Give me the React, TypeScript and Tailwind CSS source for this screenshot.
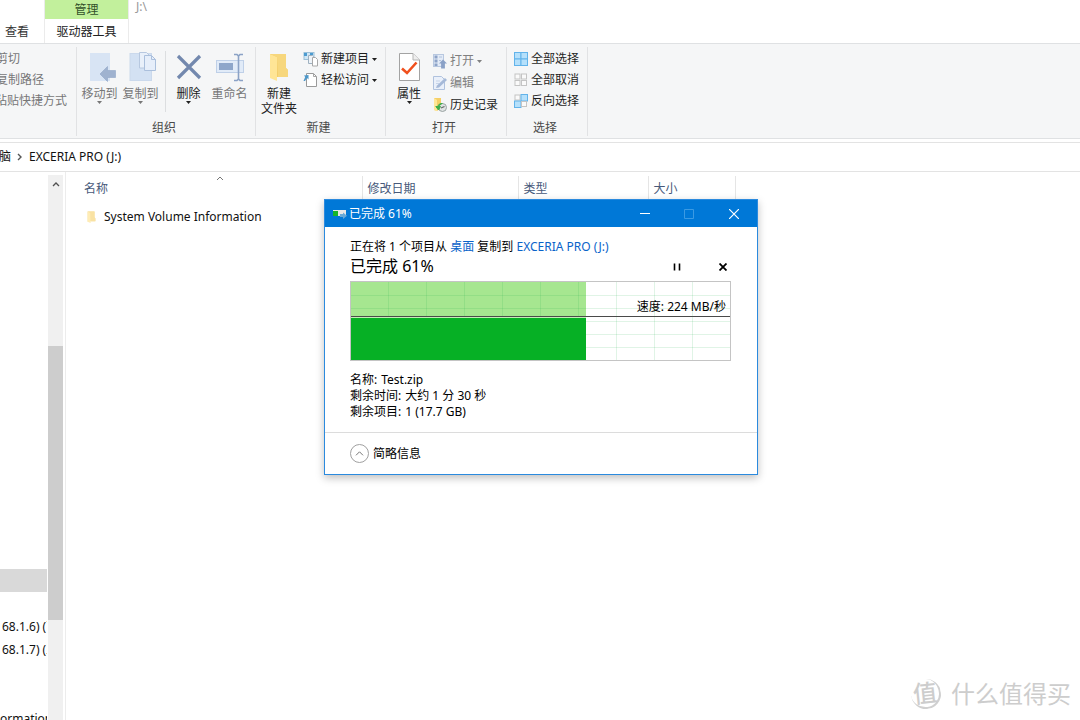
import React from "react";

function Caret({ className = "" }: { className?: string }) {
  return (
    <svg viewBox="0 0 5 3" className={`h-[3px] w-[5px] shrink-0 fill-current ${className}`} aria-hidden="true">
      <path d="M0 0H5L2.5 3Z" />
    </svg>
  );
}

function MoveIcon() {
  return (
    <svg viewBox="0 0 28 30" className="h-[30px] w-7 overflow-visible" aria-hidden="true">
      <rect x="4" y="1" width="20" height="28" fill="#d8e4f4" />
      <path d="M14 22L21.500 14.500V18.500H29.500V25.500H21.500V29.500Z" fill="#9fb2cf" stroke="#8ea4c6" strokeWidth=".6" />
    </svg>
  );
}

function CopyIcon() {
  return (
    <svg viewBox="0 0 28 30" className="h-[30px] w-7 overflow-visible" aria-hidden="true">
      <rect x="3" y="1.500" width="21.500" height="27" fill="#d3e1f3" stroke="#cbd9ec" />
      <path d="M12.500 .5h7l3 3v12.500h-10Z" fill="#e9f0fa" stroke="#b7c8e0" />
      <path d="M17.500 3.500h7l4 4v11h-11Z" fill="#e6eefa" stroke="#aabfdc" />
      <path d="M24.500 3.500v4h4" fill="none" stroke="#aabfdc" />
    </svg>
  );
}

function DeleteIcon() {
  return (
    <svg viewBox="0 0 28 30" className="h-[30px] w-7" aria-hidden="true">
      <path d="M3 4L25 26M25 4L3 26" stroke="#7388ae" strokeWidth="3.200" />
    </svg>
  );
}

function RenameIcon() {
  return (
    <svg viewBox="0 0 28 30" className="h-[30px] w-7" aria-hidden="true">
      <rect x=".5" y="8.500" width="27" height="12" fill="#e1ebf8" stroke="#bfd0e8" />
      <rect x="3" y="11" width="14" height="7" fill="#8ea6ca" />
      <path d="M18 2.500h3l1.500 1.500 1.500-1.500h3M22.500 4v23M18 28.500h3l1.500-1.500 1.500 1.500h3" fill="none" stroke="#8ba2c6" strokeWidth="1.600" />
    </svg>
  );
}

function FolderIcon({ className }: { className: string }) {
  return (
    <svg viewBox="0 0 20 28" className={className} aria-hidden="true">
      <path d="M1 1H17V15L19 17V24H6L1 25Z" fill="#f3cd69" />
      <path d="M1 1L8 4V28L1 25Z" fill="#ffe596" />
      <path d="M8 4L9 24H19V17L17 15V1H1Z" fill="#f7d77d" />
    </svg>
  );
}

function PropertiesIcon() {
  return (
    <svg viewBox="0 0 28 30" className="h-[30px] w-7" aria-hidden="true">
      <path d="M4.500 1.500H18L24.500 8V28.500H4.500Z" fill="#fff" stroke="#a3a3a3" />
      <path d="M18 1.500V8h6.500" fill="#eee" stroke="#b5b5b5" />
      <path d="M7 16.500L12 21 21.500 10.500" fill="none" stroke="#f0501e" strokeWidth="2.600" />
    </svg>
  );
}

function SmallIcon({ children }: { children: React.ReactNode }) {
  return (
    <svg viewBox="0 0 14 14" className="h-3.5 w-3.5 shrink-0 overflow-visible" aria-hidden="true">
      {children}
    </svg>
  );
}

function NewItemIcon() {
  return (
    <SmallIcon>
      <rect x="0" y=".5" width="10" height="7" fill="#cfe6f5" stroke="#9cc0d8" />
      <path d="M0 1h3v3H0zM6 1h3v2H6z" fill="#4c9bd0" />
      <path d="M4.500 3.500h4l1 1v7h-5Z" fill="#eef3f8" stroke="#9fb1c0" />
      <path d="M8.500 5.500h3l2 2v6.500h-5Z" fill="#fff" stroke="#a8a8a8" />
    </SmallIcon>
  );
}

function EasyAccessIcon() {
  return (
    <SmallIcon>
      <path d="M2.500 .5h7l3 3v10h-10Z" fill="#fff" stroke="#9a9a9a" />
      <path d="M9.500 .5v3h3" fill="none" stroke="#a5a5a5" />
      <path d="M0 2.500L4.500 2V6.500L3 5 1 8H-.5L1.200 4Z" fill="#4d97c9" />
    </SmallIcon>
  );
}

function OpenIcon() {
  return (
    <SmallIcon>
      <rect x=".5" y=".5" width="10" height="12" fill="#e3ebf7" stroke="#b8c8e0" />
      <path d="M1.500 1.500h3v3h-3zM1.500 5.500h3v3h-3zM1.500 9.500h3v2.500h-3z" fill="#8da3c8" />
      <path d="M6 3h3M6 6.500h2" stroke="#b2c2dc" />
      <path d="M10 5.500L14 9.500H11.900V14.500H8.100V9.500H6Z" fill="#8aa1c7" />
    </SmallIcon>
  );
}

function EditIcon() {
  return (
    <SmallIcon>
      <path d="M.5 .5h8l3 3v10H.5Z" fill="#eaf0fa" stroke="#b0c2de" />
      <path d="M3 5h4M3 7.500h3" stroke="#c6d4e9" />
      <path d="M3 12L4 9.500 12 2 14 4 6 11.500Z" fill="#a6b9d8" />
    </SmallIcon>
  );
}

function HistoryIcon() {
  return (
    <SmallIcon>
      <path d="M1 0h7v10l-4 3-3-1z" fill="#f5cf68" />
      <path d="M1 0l3 2v11l-3-1z" fill="#ffe797" />
      <circle cx="9.500" cy="9.500" r="4" fill="#dfe3e3" stroke="#9aa3a3" />
      <path d="M8 10L11.500 8.500" fill="none" stroke="#666" strokeWidth="1.300" />
      <path d="M9.500 5.500C7 5 5 6.500 5 9M2.800 8.500H7.500L5.500 12Z" fill="#3fae49" stroke="#3fae49" />
    </SmallIcon>
  );
}

function TilesIcon({ on }: { on: boolean[] }) {
  const spots = [[0.5, 0.5], [7, 0.5], [0.5, 7], [7, 7]];
  return (
    <SmallIcon>
      {spots.map(([x, y], i) => (
        <rect key={i} x={on[i] ? x : x + 0.5} y={on[i] ? y : y + 0.5} width={on[i] ? 6.5 : 5} height={on[i] ? 6.5 : 5} fill={on[i] ? "#b5e0fb" : "#fafafa"} stroke={on[i] ? "#62b3ea" : "#c4c4c4"} />
      ))}
    </SmallIcon>
  );
}

function Group({ label, width, children }: { label: string; width: string; children: React.ReactNode }) {
  return (
    <section className={`flex shrink-0 flex-col border-r border-[#e1e2e4] ${width}`} aria-label={label}>
      <div className="flex flex-1">{children}</div>
      <h2 className="pr-1 text-center leading-4 text-[#4a4a4a]">{label}</h2>
    </section>
  );
}

function BigButton({ icon, label, disabled, caret, width }: { icon: React.ReactNode; label: React.ReactNode; disabled?: boolean; caret?: boolean; width: string }) {
  return (
    <button type="button" disabled={disabled} className={`flex shrink-0 flex-col items-center pt-[5px] ${width} ${disabled ? "text-[#777]" : "text-[#222]"}`}>
      {icon}
      <span className="mt-1 leading-[15px] whitespace-nowrap">{label}</span>
      {caret && <Caret />}
    </button>
  );
}

function SmallButton({ icon, label, disabled, caret }: { icon: React.ReactNode; label: string; disabled?: boolean; caret?: boolean }) {
  return (
    <button type="button" disabled={disabled} className={`flex items-center leading-4 whitespace-nowrap ${disabled ? "text-[#808080]" : "text-[#1e1e1e]"}`}>
      {icon}
      <span className="ml-[3px]">{label}</span>
      {caret && <Caret className="ml-[3px]" />}
    </button>
  );
}

function Ribbon() {
  return (
    <div className="flex h-24 shrink-0 overflow-hidden border-y border-[#dfe1e3] bg-[#f5f6f7] pt-[3px] pb-0.5">
      <div className="flex w-[77px] shrink-0 flex-col items-end gap-[5px] border-r border-[#e1e2e4] pt-1 text-[#777]">
        <button type="button" className="mr-14 leading-4 whitespace-nowrap">剪切</button>
        <button type="button" className="mr-8 leading-4 whitespace-nowrap">复制路径</button>
        <button type="button" className="mr-[9px] leading-4 whitespace-nowrap">粘贴快捷方式</button>
      </div>
      <Group label="组织" width="w-[179px]">
        <div className="flex pl-0.5">
          <BigButton width="w-[41px]" icon={<MoveIcon />} label="移动到" disabled caret />
          <BigButton width="w-[41px]" icon={<CopyIcon />} label="复制到" disabled caret />
        </div>
        <div className="mt-1 mb-2 ml-1 border-l border-[#dcdee0]" />
        <div className="flex pl-0.5">
          <BigButton width="w-[41px]" icon={<DeleteIcon />} label="删除" caret />
          <BigButton width="w-[41px]" icon={<RenameIcon />} label="重命名" disabled />
        </div>
      </Group>
      <Group label="新建" width="w-[130px]">
        <BigButton width="w-[46px]" icon={<FolderIcon className="h-[30px] w-5" />} label={<>新建<br />文件夹</>} />
        <div className="flex flex-col gap-[5px] pt-1 pl-0.5">
          <SmallButton icon={<NewItemIcon />} label="新建项目" caret />
          <SmallButton icon={<EasyAccessIcon />} label="轻松访问" caret />
        </div>
      </Group>
      <Group label="打开" width="w-[121px]">
        <BigButton width="w-[46px]" icon={<PropertiesIcon />} label="属性" caret />
        <div className="flex flex-col gap-1.5 pt-1.5 pl-px">
          <SmallButton icon={<OpenIcon />} label="打开" disabled caret />
          <SmallButton icon={<EditIcon />} label="编辑" disabled />
          <SmallButton icon={<HistoryIcon />} label="历史记录" />
        </div>
      </Group>
      <Group label="选择" width="w-[81px]">
        <div className="flex flex-col gap-[5px] pt-1 pl-[7px]">
          <SmallButton icon={<TilesIcon on={[true, true, true, true]} />} label="全部选择" />
          <SmallButton icon={<TilesIcon on={[false, false, false, false]} />} label="全部取消" />
          <SmallButton icon={<TilesIcon on={[false, true, true, false]} />} label="反向选择" />
        </div>
      </Group>
    </div>
  );
}

function Chart() {
  return (
    <div className="relative mt-1 h-20 border border-[#c4c4c4]">
      <svg viewBox="0 0 379 78" preserveAspectRatio="none" className="block h-full w-full" role="img" aria-label="速度">
        <rect width="379" height="78" fill="#fff" />
        <rect width="235" height="36" fill="#a6e690" />
        <g stroke="#22b14c" strokeOpacity=".14">
          {[1, 2, 3, 4, 5, 6, 7, 8, 9].map((n) => (
            <path key={n} d={`M${n * 38 - 0.5} 0V78`} />
          ))}
          {[13, 26, 39, 52, 65].map((y) => (
            <path key={y} d={`M0 ${y + 0.5}H379`} />
          ))}
        </g>
        <rect y="36" width="235" height="42" fill="#06b025" />
        <path d="M0 35.500H235" stroke="#c2efb4" />
        <path d="M0 34.500H379" stroke="#4a4a4a" />
      </svg>
      <p className="absolute top-[17px] right-1 leading-4">速度: 224 MB/秒</p>
    </div>
  );
}

function CopyDialog() {
  return (
    <div role="dialog" aria-label="已完成 61%" className="absolute top-[199px] left-[324px] w-[434px] border border-[#2b8ade] bg-white text-black shadow-[0_3px_8px_rgba(0,0,0,0.25)]">
      <header className="flex h-[27px] items-center bg-[#0078d7] text-white">
        <svg viewBox="0 0 14 10" className="ml-2 h-2.5 w-3.5" aria-hidden="true">
          <rect y="1" width="13" height="6" fill="#e7e7e7" />
          <rect x="0" y="2" width="5" height="5" fill="#16b52b" />
          <path d="M7 5h3V3.500l4 3.200-4 3.200V8H7z" fill="#67a9d8" />
        </svg>
        <h1 className="ml-0.5 flex-1 leading-4">已完成 61%</h1>
        <button type="button" aria-label="最小化" className="flex h-full w-11 items-center justify-center">
          <svg viewBox="0 0 10 10" className="h-2.5 w-2.5 stroke-white"><path d="M0 4.500H10" /></svg>
        </button>
        <button type="button" disabled aria-label="最大化" className="flex h-full w-11 items-center justify-center">
          <svg viewBox="0 0 10 10" className="h-2.5 w-2.5 fill-none stroke-[#3b9ae3]"><path d="M.5 .5h9v9h-9Z" /></svg>
        </button>
        <button type="button" aria-label="关闭" className="flex h-full w-[46px] items-center justify-center">
          <svg viewBox="0 0 10 10" className="h-2.5 w-2.5 stroke-white"><path d="M0 0L10 10M10 0L0 10" strokeWidth="1.200" /></svg>
        </button>
      </header>
      <div className="pt-3 pr-[26px] pb-3 pl-[25px]">
        <p className="leading-4">
          正在将 1 个项目从 <a href="#desktop" className="text-[#0a63c9]">桌面</a> 复制到 <a href="#drive" className="text-[#0a63c9]">EXCERIA PRO (J:)</a>
        </p>
        <div className="flex items-center">
          <h2 className="flex-1 text-base leading-[22px]">已完成 61%</h2>
          <button type="button" aria-label="暂停" className="flex h-5 w-[46px] items-center justify-center pt-0.5">
            <svg viewBox="0 0 8 8" className="h-2 w-2"><path d="M1.500 .5v7M6.500 .5v7" stroke="#000" strokeWidth="1.600" /></svg>
          </button>
          <button type="button" aria-label="取消" className="mr-[-15px] flex h-5 w-[46px] items-center justify-center pt-0.5">
            <svg viewBox="0 0 8 8" className="h-2 w-2"><path d="M.5 .5l7 7M7.500 .5l-7 7" stroke="#000" strokeWidth="1.800" /></svg>
          </button>
        </div>
        <Chart />
        <dl className="mt-[11px] leading-4">
          <div className="flex gap-1"><dt>名称:</dt><dd>Test.zip</dd></div>
          <div className="flex gap-1"><dt>剩余时间:</dt><dd>大约 1 分 30 秒</dd></div>
          <div className="flex gap-1"><dt>剩余项目:</dt><dd>1 (17.7 GB)</dd></div>
        </dl>
      </div>
      <footer className="border-t border-[#dcdcdc] px-[25px] py-[11px]">
        <button type="button" className="flex items-center gap-1">
          <svg viewBox="0 0 19 19" className="h-[19px] w-[19px] fill-none" aria-hidden="true">
            <circle cx="9.500" cy="9.500" r="9" stroke="#a0a0a0" />
            <path d="M6 11.300L9.500 7.800 13 11.300" stroke="#777" />
          </svg>
          <span className="leading-4">简略信息</span>
        </button>
      </footer>
    </div>
  );
}

function Sidebar() {
  const rows = ["", "", "68.1.6) (丁", "68.1.7) (工"];
  return (
    <aside className="flex w-[66px] shrink-0 border-r border-[#ececec] pr-0.5">
      <nav className="flex w-12 flex-col overflow-hidden pt-[397px] pr-px leading-[23px] whitespace-nowrap">
        {rows.map((text, i) => (
          <a key={i} href="#item" className={`h-[23px] shrink-0 overflow-hidden pl-0.5 ${i === 0 ? "bg-[#d9d9d9]" : ""}`}>{text}</a>
        ))}
        <a href="#info" className="mt-[46px] shrink-0 overflow-hidden">ormation</a>
      </nav>
      <div className="mt-[3px] flex w-[15px] flex-col items-center bg-[#f0f0f0]">
        <svg viewBox="0 0 8 5" className="mt-[7px] h-[5px] w-2 shrink-0 fill-none" aria-hidden="true">
          <path d="M1 4L4 1 7 4" stroke="#505050" strokeWidth="1.300" />
        </svg>
        <div className="mt-[159px] h-[274px] w-full shrink-0 bg-[#cdcdcd]" />
      </div>
    </aside>
  );
}

function FileList() {
  return (
    <main className="flex-1 pt-1 pl-[18px]">
      <table className="table-fixed border-collapse text-left">
        <thead>
          <tr className="h-[25px] text-[#47597a]">
            <th className="relative w-[278px] border-r border-[#e5e5e5] font-normal">
              名称
              <svg viewBox="0 0 8 5" className="absolute top-0 left-[132px] h-[5px] w-2 fill-none" aria-hidden="true">
                <path d="M1 4L4 1 7 4" stroke="#777" />
              </svg>
            </th>
            <th className="w-[156px] border-r border-[#e5e5e5] pl-[5px] font-normal">修改日期</th>
            <th className="w-[130px] border-r border-[#e5e5e5] pl-[5px] font-normal">类型</th>
            <th className="w-[87px] border-r border-[#e5e5e5] pl-[5px] font-normal">大小</th>
          </tr>
        </thead>
        <tbody>
          <tr className="h-8">
            <td colSpan={4}>
              <span className="flex items-center gap-2">
                <FolderIcon className="ml-[3px] h-3 w-[9px] opacity-70" />
                System Volume Information
              </span>
            </td>
          </tr>
        </tbody>
      </table>
    </main>
  );
}

function Watermark() {
  return (
    <div className="absolute right-[9px] bottom-[10px] flex items-center gap-2.5 text-[#cdcdcd]">
      <span className="flex h-[30px] w-[30px] -rotate-6 items-center justify-center rounded-full border-r-2 border-b-2 border-[#d0d0d0] text-2xl leading-none font-medium">值</span>
      <span className="text-2xl leading-8">什么值得买</span>
    </div>
  );
}

export default function App() {
  return (
    <div className="relative flex h-screen flex-col overflow-hidden bg-white font-['Noto_Sans','Noto_Sans_CJK_SC',sans-serif] text-xs text-[#111]">
      <div className="flex h-[43px] shrink-0">
        <button type="button" className="w-11 shrink-0 self-end pr-[15px] pb-[3px] text-right leading-4 text-[#333]">查看</button>
        <div className="flex w-[85px] shrink-0 flex-col border-x border-[#ebebeb] text-center">
          <span className="h-[19px] bg-[#c2f09c] leading-[19px] text-[#33502a]">管理</span>
          <button type="button" className="flex-1 pt-px text-[#222]">驱动器工具</button>
        </div>
        <span className="pl-[7px] leading-[14px] text-[#999]">J:\</span>
      </div>
      <Ribbon />
      <nav className="mt-[3px] flex h-[30px] shrink-0 items-center border-y border-[#e3e3e3]" aria-label="地址">
        <a href="#pc" className="-ml-px">脑</a>
        <svg viewBox="0 0 5 8" className="ml-1.5 h-2 w-[5px] fill-none" aria-hidden="true">
          <path d="M1 1L4 4 1 7" stroke="#555" strokeWidth="1.400" />
        </svg>
        <a href="#drive" className="ml-[7px]">EXCERIA PRO (J:)</a>
      </nav>
      <div className="flex min-h-0 flex-1 overflow-hidden">
        <Sidebar />
        <FileList />
      </div>
      <CopyDialog />
      <Watermark />
    </div>
  );
}
